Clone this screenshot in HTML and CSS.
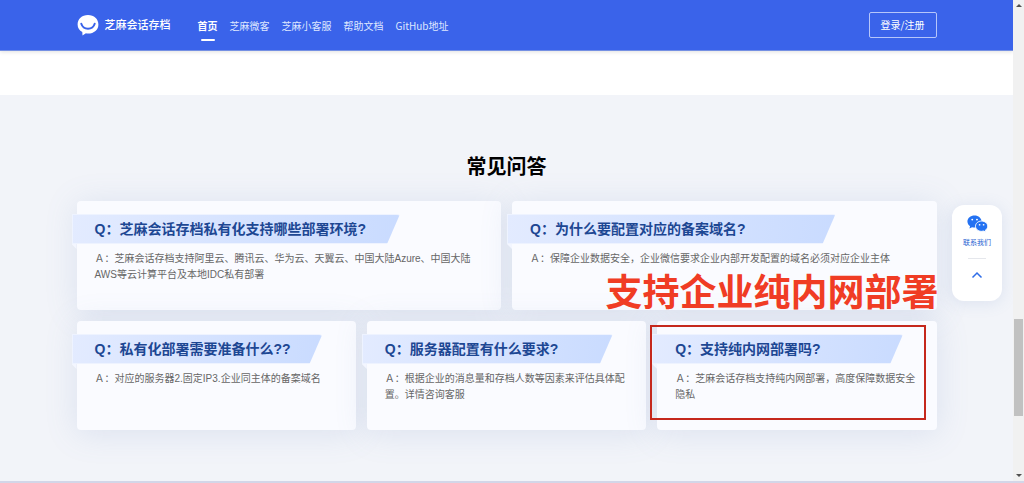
FILE: index.html
```html
<!DOCTYPE html>
<html lang="zh-CN">
<head>
<meta charset="utf-8">
<title>芝麻会话存档</title>
<link rel="stylesheet" href="styles.css">
</head>
<body>
<div class="window">
  <div class="page">
    <header class="header">
      <div class="container header-row">
        <a class="brand" href="#">
          <svg class="brand-logo" viewBox="0 0 22 22" aria-hidden="true">
            <path fill="#fff" d="M11 1C4.800 1 .6 5 .6 10.400c0 3.400 1.900 6.200 4.700 7.700l.2 3.300 3.400-2.100c.7.100 1.400.2 2.100.2 6.100 0 10.400-3.800 10.400-9.100S17.100 1 11 1z"/>
            <path fill="none" stroke="#3a63ea" stroke-width="2" stroke-linecap="round" d="M4.300 9.800c1 3.200 3.600 5 6.700 5s5.700-1.800 6.700-5"/>
          </svg>
          <span class="brand-name">芝麻会话存档</span>
        </a>
        <nav class="nav">
          <a class="nav-link active" href="#">首页</a>
          <a class="nav-link" href="#">芝麻微客</a>
          <a class="nav-link" href="#">芝麻小客服</a>
          <a class="nav-link" href="#">帮助文档</a>
          <a class="nav-link" href="#">GitHub地址</a>
        </nav>
        <button class="login" type="button">登录/注册</button>
      </div>
    </header>
    <main class="faq">
      <div class="container">
        <h1 class="faq-title">常见问答</h1>
        <div class="cards">
          <article class="card wide">
            <h2 class="question">Q：芝麻会话存档私有化支持哪些部署环境?</h2>
            <p class="answer">Ａ：芝麻会话存档支持阿里云、腾讯云、华为云、天翼云、中国大陆Azure、中国大陆AWS等云计算平台及本地IDC私有部署</p>
          </article>
          <article class="card wide">
            <h2 class="question">Q：为什么要配置对应的备案域名?</h2>
            <p class="answer">Ａ：保障企业数据安全，企业微信要求企业内部开发配置的域名必须对应企业主体</p>
            <strong class="callout">支持企业纯内网部署</strong>
          </article>
          <article class="card">
            <h2 class="question">Q：私有化部署需要准备什么??</h2>
            <p class="answer">Ａ：对应的服务器2.固定IP3.企业同主体的备案域名</p>
          </article>
          <article class="card">
            <h2 class="question">Q：服务器配置有什么要求?</h2>
            <p class="answer">Ａ：根据企业的消息量和存档人数等因素来评估具体配置。详情咨询客服</p>
          </article>
          <article class="card marked">
            <h2 class="question">Q：支持纯内网部署吗?</h2>
            <p class="answer">Ａ：芝麻会话存档支持纯内网部署，高度保障数据安全隐私</p>
          </article>
        </div>
      </div>
    </main>
    <aside class="float-bar">
      <a class="contact" href="#">
        <svg class="wechat" viewBox="0 0 20 17" aria-hidden="true">
          <path fill="#2472f2" d="M7.200.5C3.400.5.4 3 .4 6.200c0 1.800 1 3.400 2.500 4.500l-.6 2.200 2.500-1.300c.8.200 1.600.3 2.400.3 3.700 0 6.700-2.600 6.700-5.700S10.900.5 7.200.5z"/>
          <path fill="#2472f2" stroke="#fff" stroke-width=".9" d="M13.900 5.700c-3.300 0-5.800 2.200-5.800 4.900s2.500 4.900 5.800 4.900c.7 0 1.300-.1 1.900-.3l2.200 1.200-.6-1.900c1.400-.9 2.300-2.300 2.300-3.900 0-2.700-2.500-4.900-5.800-4.900z"/>
          <g fill="#fff"><circle cx="5" cy="4.300" r=".9"/><circle cx="9.500" cy="4.300" r=".9"/><circle cx="12" cy="9.200" r=".8"/><circle cx="15.800" cy="9.200" r=".8"/></g>
        </svg>
        <span>联系我们</span>
      </a>
      <button class="to-top" type="button" aria-label="返回顶部">
        <svg viewBox="0 0 12 8" aria-hidden="true"><path fill="none" stroke="#2f6de8" stroke-width="1.500" d="M1.500 6.500 6 2l4.500 4.500"/></svg>
      </button>
    </aside>
  </div>
  <div class="scrollbar" aria-hidden="true">
    <span class="arrow up"></span>
    <span class="space-before"></span>
    <span class="thumb"></span>
    <span class="space-after"></span>
    <span class="arrow down"></span>
  </div>
</div>
</body>
</html>
```
FILE: styles.css
```css
* {
  box-sizing: border-box;
}

body {
  margin: 0;
  font-family: "Liberation Sans", "Noto Sans CJK SC", sans-serif;
  font-size: 10px;
  line-height: 16px;
  color: #666;
}

a {
  color: inherit;
  text-decoration: none;
}

button {
  font: inherit;
  cursor: pointer;
}

.window {
  display: grid;
  grid-template-columns: 1fr 11px;
  min-height: 100vh;
  border-bottom: 2px solid #d3d6e8;
}

.page {
  position: relative;
  display: flex;
  flex-direction: column;
  overflow: hidden;
  background: #fff;
}

.container {
  width: 85%;
  max-width: 860px;
  margin: 0 auto;
}

.header {
  background: #3a63ea;
  border-bottom: 1px solid #7590e3;
  box-shadow: 0 1px 4px rgba(0, 0, 0, 0.12);
}

.header-row {
  display: flex;
  align-items: center;
  height: 50px;
  color: #fff;
}

.brand {
  display: flex;
  align-items: center;
  gap: 6px;
}

.brand-logo {
  width: 22px;
  height: 22px;
}

.brand-name {
  font-size: 11px;
  font-weight: 500;
}

.nav {
  display: flex;
  gap: 12px;
  margin-left: 27px;
  padding-top: 1px;
  font-family: "Noto Sans CJK SC", sans-serif;
}

.nav-link {
  padding: 5px 0;
  color: #dfe7ff;
}

.nav-link.active {
  position: relative;
  font-weight: 700;
  color: #fff;
}

.nav-link.active::after {
  content: "";
  position: absolute;
  bottom: -2px;
  left: 3px;
  right: 3px;
  height: 2px;
  border-radius: 1px;
  background: #fff;
}

.login {
  margin-left: auto;
  padding: 4px 11px;
  border: 1px solid #b6c6fa;
  border-radius: 2px;
  background: transparent;
  font-family: "Noto Sans CJK SC", sans-serif;
  color: #fff;
}

.faq {
  flex: 1;
  margin-top: 44px;
  padding: 57px 0 48px;
  background: #f2f4f9;
}

.faq-title {
  margin: 0 0 19px;
  font-size: 20px;
  font-weight: 700;
  line-height: 30px;
  text-align: center;
  color: #000;
}

.cards {
  display: grid;
  grid-template-columns: repeat(6, 1fr);
  gap: 11px;
}

.card {
  position: relative;
  grid-column: span 2;
  min-height: 109px;
  padding: 13px 20px 12px 18px;
  border-radius: 4px;
  background: #fafbff;
  box-shadow: 0 3px 32px rgba(104, 134, 192, 0.17);
}

.card.wide {
  grid-column: span 3;
}

.question {
  position: relative;
  z-index: 1;
  width: 104%;
  margin: 0 0 7px -23px;
  padding-left: 23px;
  font-size: 14px;
  font-weight: 700;
  line-height: 30px;
  white-space: nowrap;
  color: #1d4793;
}

.wide .question {
  width: 85%;
}

.question::before {
  content: "";
  position: absolute;
  z-index: -1;
  inset: 0;
  border: 1px solid #eef3ff;
  border-right: 0;
  border-radius: 0 3px 0 0;
  background: linear-gradient(100deg, #e3ebff, #c9dbff);
  clip-path: polygon(0 0, 100% 0, calc(100% - 13px) 100%, 0 100%);
}

.question::after {
  content: "";
  position: absolute;
  top: 100%;
  left: 0;
  width: 5px;
  height: 5px;
  background: #f3f6ff;
  clip-path: polygon(0 0, 100% 0, 100% 100%);
}

.answer {
  margin: 0;
}

.callout {
  position: absolute;
  z-index: 2;
  right: -2px;
  bottom: -6px;
  font-size: 37px;
  font-weight: 700;
  line-height: 44px;
  white-space: nowrap;
  color: #f03c24;
}

.marked::after {
  content: "";
  position: absolute;
  z-index: 2;
  inset: 4px 11px 10px -7px;
  border: 2px solid #c5281c;
}

.float-bar {
  position: absolute;
  top: 205px;
  right: 11px;
  display: flex;
  flex-direction: column;
  align-items: center;
  width: 50px;
  padding: 10px 8px;
  border-radius: 12px;
  background: #fff;
  box-shadow: 0 2px 16px rgba(104, 134, 192, 0.16);
}

.contact {
  display: flex;
  flex-direction: column;
  align-items: center;
  gap: 2px;
  padding-bottom: 7px;
  font-size: 7px;
  white-space: nowrap;
  color: #2763d2;
}

.wechat {
  width: 21px;
  height: 18px;
}

.to-top {
  width: 18px;
  padding: 12px 0;
  border: 0;
  border-top: 1px solid #e5e7ec;
  background: transparent;
}

.to-top svg {
  display: block;
  width: 12px;
  height: 8px;
  margin: 0 auto;
}

.scrollbar {
  display: flex;
  flex-direction: column;
  align-items: center;
  padding: 4px 0;
  background: #f1f1f1;
}

.arrow {
  border: 3px solid transparent;
}

.arrow.up {
  border-top: 0;
  border-bottom-color: #505050;
}

.arrow.down {
  border-bottom: 0;
  border-top-color: #505050;
}

.space-before {
  flex: 312;
}

.thumb {
  flex: 97;
  width: 9px;
  background: #c1c1c1;
}

.space-after {
  flex: 58;
}
```
